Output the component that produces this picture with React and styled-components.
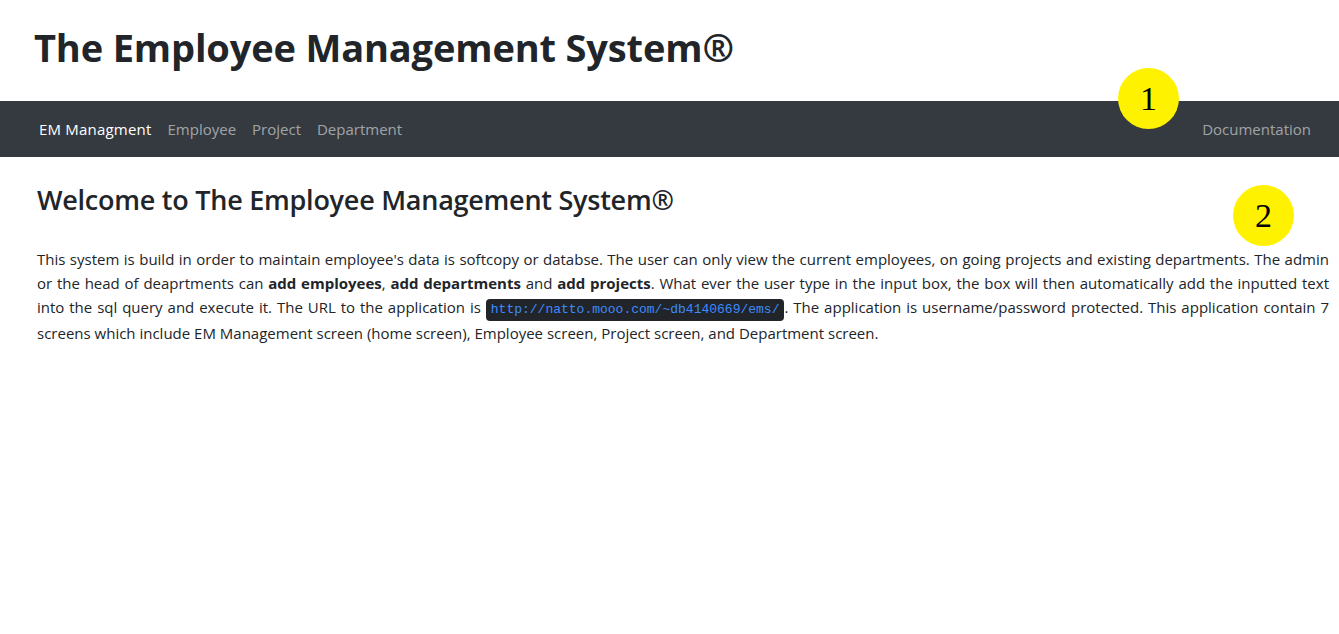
import React from "react"
import styled, { createGlobalStyle } from "styled-components"

const GlobalStyle = createGlobalStyle`
  html, body {
    margin: 0;
    padding: 0;
    background: #ffffff;
  }
  body {
    font-family: "Open Sans", "Noto Sans", "Liberation Sans", sans-serif;
    color: #212529;
  }
`

const Page = styled.div`
  position: relative;
  width: 1339px;
  min-height: 634px;
`

const Header = styled.header`
  height: 101px;
  display: flex;
  align-items: center;
  padding: 0 0 8px 34px;
  box-sizing: border-box;
`

const Title = styled.h1`
  margin: 0;
  font-size: 38px;
  font-weight: 700;
  letter-spacing: -0.15px;
  color: #212529;
`

const NavBar = styled.nav`
  height: 56px;
  background: #343a40;
  display: flex;
  align-items: center;
  justify-content: space-between;
  padding: 0 28px 0 39px;
`

const NavGroup = styled.div`
  display: flex;
  align-items: center;
  gap: 16px;
`

const NavLink = styled.a`
  font-size: 15px;
  color: ${(p) => (p.$active ? "#ffffff" : "rgba(255,255,255,0.55)")};
  letter-spacing: ${(p) => (p.$active ? "0.2px" : "0")};
  text-decoration: none;
  cursor: pointer;
`

const Content = styled.main`
  padding: 26px 10px 0 37px;
`

const Heading = styled.h2`
  margin: 0 0 30px;
  font-size: 27px;
  font-weight: 600;
  line-height: 34px;
  letter-spacing: -0.25px;
  color: #212529;
`

const Paragraph = styled.p`
  margin: 0;
  font-size: 15px;
  line-height: 24px;
  text-align: justify;
`

const Code = styled.kbd`
  display: inline-block;
  font-family: "Liberation Mono", "DejaVu Sans Mono", monospace;
  font-size: 13px;
  line-height: 20px;
  padding: 1px 5px;
  border-radius: 4px;
  background: #212529;
  color: #3d8bfd;
`

const Marker = styled.div`
  position: absolute;
  left: ${(p) => p.$x}px;
  top: ${(p) => p.$y}px;
  width: 61px;
  height: 61px;
  border-radius: 50%;
  background: #fff200;
  display: flex;
  align-items: center;
  justify-content: center;
  font-family: "Liberation Serif", serif;
  font-size: 34px;
  color: #000;
`

export default function App() {
  return (
    <Page>
      <GlobalStyle />
      <Header>
        <Title>The Employee Management System®</Title>
      </Header>
      <NavBar>
        <NavGroup>
          <NavLink $active>EM Managment</NavLink>
          <NavLink>Employee</NavLink>
          <NavLink>Project</NavLink>
          <NavLink>Department</NavLink>
        </NavGroup>
        <NavLink>Documentation</NavLink>
      </NavBar>
      <Content>
        <Heading>Welcome to The Employee Management System®</Heading>
        <Paragraph>
          This system is build in order to maintain employee's data is softcopy or databse. The user can only view
          the current employees, on going projects and existing departments. The admin or the head of deaprtments
          can <b>add employees</b>, <b>add departments</b> and <b>add projects</b>. What ever the user type in the
          input box, the box will then automatically add the inputted text into the sql query and execute it. The
          URL to the application is <Code>http://natto.mooo.com/~db4140669/ems/</Code>. The application is
          username/password protected. This application contain 7 screens which include EM Management screen (home
          screen), Employee screen, Project screen, and Department screen.
        </Paragraph>
      </Content>
      <Marker $x={1118} $y={68}>1</Marker>
      <Marker $x={1233} $y={185}>2</Marker>
    </Page>
  )
}
